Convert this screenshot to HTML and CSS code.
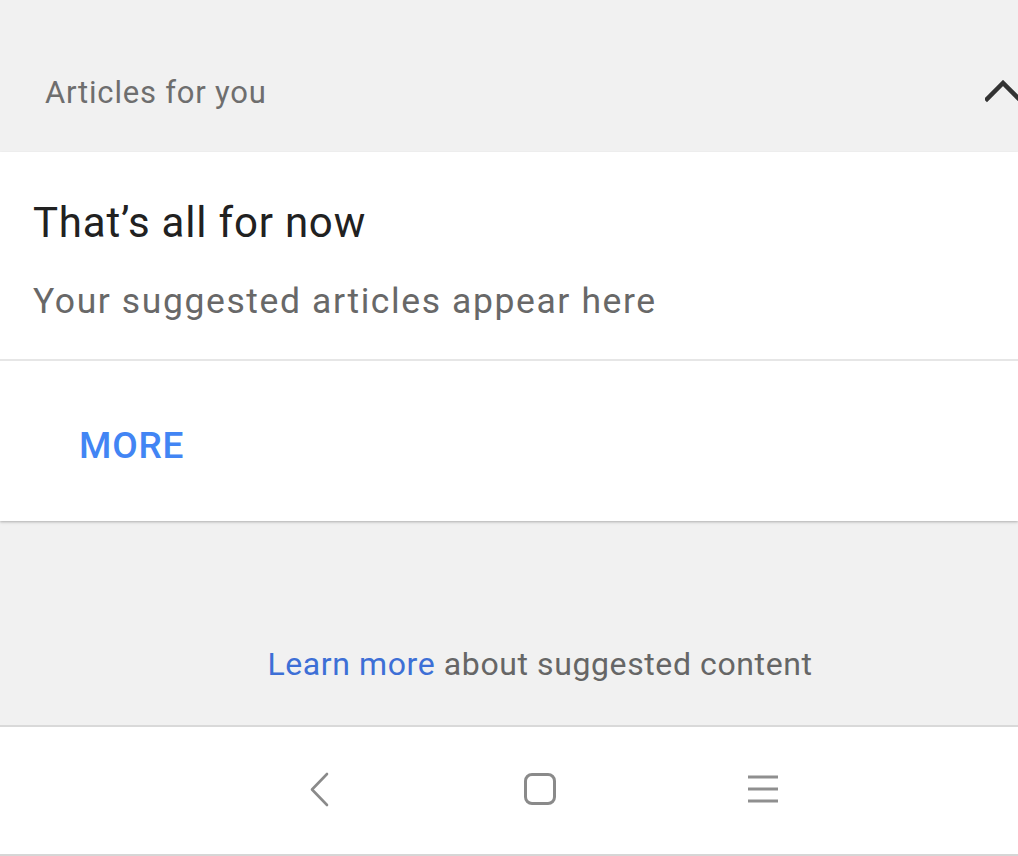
FILE: index.html
```html
<!DOCTYPE html>
<html>
<head>
<meta charset="utf-8">
<link rel="stylesheet" href="styles.css">
</head>
<body>
<div class="screen">
  <header class="section-header">
    <span class="section-title">Articles for you</span>
    <svg class="collapse-icon" width="36" height="24" viewBox="0 0 36 24">
      <path d="M2 19 L18 3 L34 19" fill="none" stroke="#333" stroke-width="4.5" stroke-linecap="square"/>
    </svg>
  </header>
  <div class="card">
    <div class="card-body">
      <h1 class="card-title">That’s all for now</h1>
      <p class="card-text">Your suggested articles appear here</p>
    </div>
    <div class="card-actions">
      <span class="more-btn">MORE</span>
    </div>
  </div>
  <div class="info">
    <p class="info-text"><a class="info-link">Learn more</a> about suggested content</p>
  </div>
  <nav class="navbar">
    <svg class="nav-icon" width="40" height="40" viewBox="0 0 40 40">
      <path d="M29 5 L14 20.5 L29 36" fill="none" stroke="#8a8a8a" stroke-width="2.6" stroke-linecap="round" stroke-linejoin="round"/>
    </svg>
    <svg class="nav-icon" width="40" height="40" viewBox="0 0 40 40">
      <rect x="5.5" y="5.5" width="29" height="29" rx="6.5" fill="none" stroke="#8a8a8a" stroke-width="3"/>
    </svg>
    <svg class="nav-icon" width="40" height="40" viewBox="0 0 40 40">
      <path d="M6 8 H36 M6 20 H36 M6 32 H36" fill="none" stroke="#8f8f8f" stroke-width="3"/>
    </svg>
  </nav>
</div>
</body>
</html>
```
FILE: styles.css
```css
* { box-sizing: border-box; }
html, body { margin: 0; padding: 0; }
body {
  width: 1018px;
  height: 856px;
  overflow: hidden;
  background: #f1f1f1;
  font-family: Roboto, "Liberation Sans", sans-serif;
}
.screen {
  display: flex;
  flex-direction: column;
  height: 856px;
}
.section-header {
  height: 152px;
  display: flex;
  align-items: center;
  justify-content: space-between;
  padding: 32px 0 0 45px;
  background: #f1f1f1;
}
.section-title {
  font-size: 31px;
  color: #6e6e6e;
  letter-spacing: 0.8px;
}
.collapse-icon {
  margin-right: -3px;
  margin-top: -1px;
}
.card {
  background: #fff;
  box-shadow: 0 1px 2px rgba(0,0,0,0.18), 0 2px 3px rgba(0,0,0,0.08);
  position: relative;
  z-index: 1;
}
.card-body {
  padding: 0 0 0 33px;
  height: 209px;
  border-bottom: 2px solid #e6e6e6;
  display: flex;
  flex-direction: column;
}
.card-title {
  margin: 46px 0 0 0;
  font-size: 42px;
  font-weight: 400;
  color: #212121;
  line-height: 50px;
  letter-spacing: 0.8px;
}
.card-text {
  margin: 33px 0 0 0;
  font-size: 35.5px;
  color: #686868;
  line-height: 40px;
  letter-spacing: 1.6px;
}
.card-actions {
  height: 160px;
  display: flex;
  align-items: center;
  padding: 0 0 0 79px;
}
.more-btn {
  font-size: 37px;
  font-weight: 500;
  color: #4285f4;
  margin-top: 8px;
  letter-spacing: 0.8px;
}
.info {
  flex: 1;
  display: flex;
  justify-content: center;
  align-items: flex-start;
  border-bottom: 2px solid #d9d9d9;
}
.info-text {
  margin: 123px 0 0 0;
  font-size: 32px;
  color: #666;
  line-height: 40px;
  letter-spacing: 0.6px;
  padding-left: 62px;
}
.info-link {
  color: #3d6fd6;
}
.navbar {
  height: 129px;
  background: #fff;
  display: flex;
  justify-content: center;
  align-items: center;
  gap: 182px;
  padding: 0 0 4px 62px;
  border-bottom: 2px solid #d6d6d6;
}
.nav-icon {
  display: block;
}
```
